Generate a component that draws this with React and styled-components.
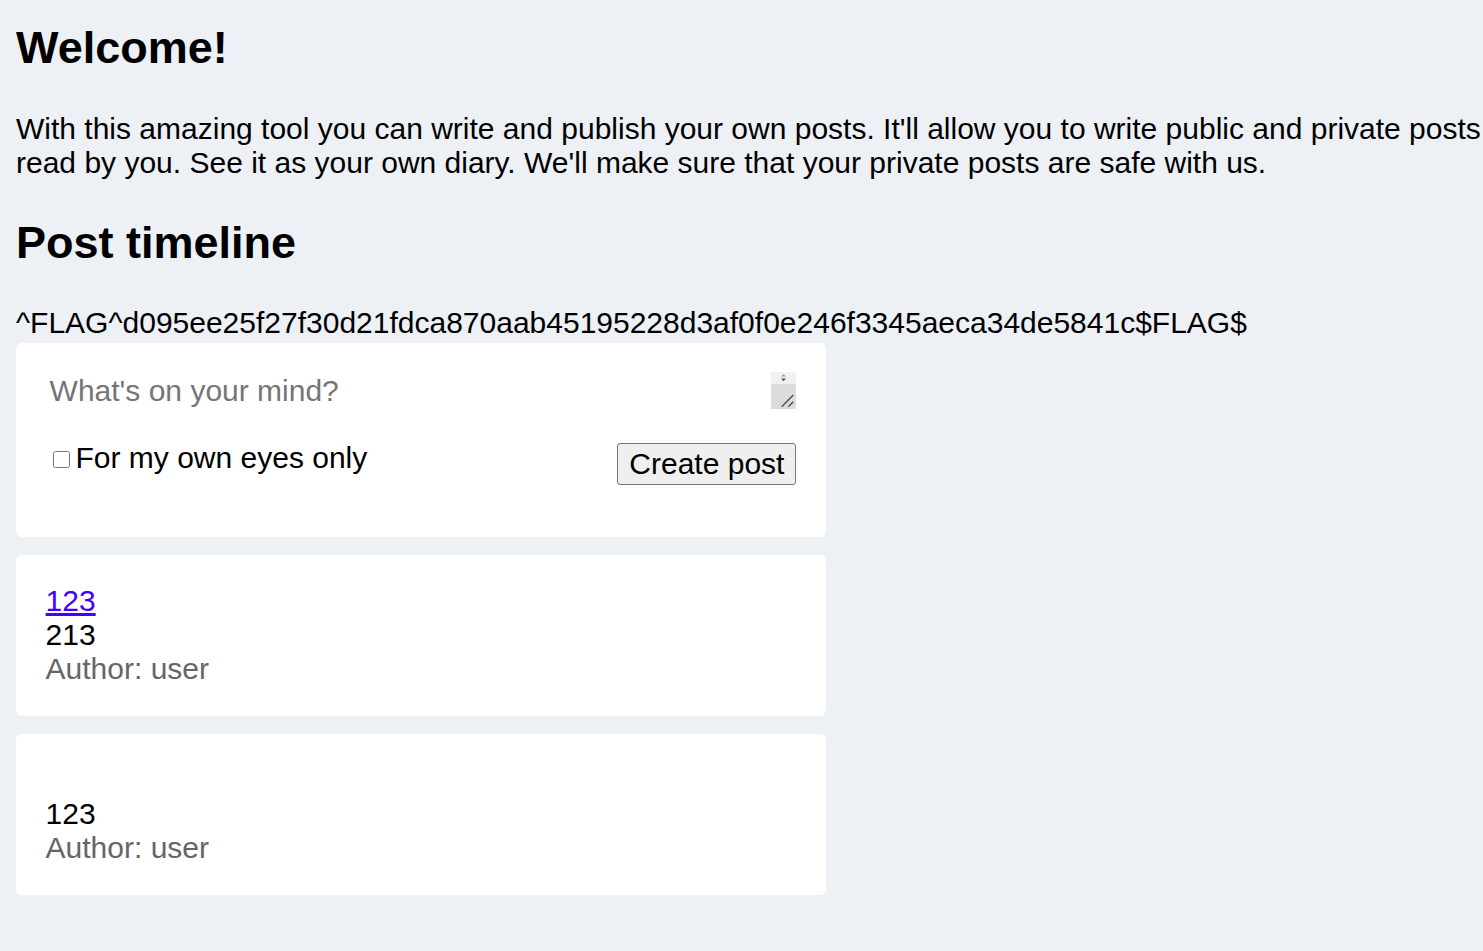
import React from 'react';
import styled, { createGlobalStyle } from 'styled-components';

const GlobalStyle = createGlobalStyle`
  html { overflow-x: hidden; }
  body {
    margin: 0;
    background: #edf0f5;
    font-family: "Liberation Sans", Arial, sans-serif;
    font-size: 30px;
    color: #000;
    overflow-x: hidden;
  }
`;

const Page = styled.main`
  padding: 22px 0 40px 16px;
`;

const Title = styled.h2`
  margin: 0 0 ${p => p.$mb}px;
  font-size: 45px;
  font-weight: 700;
  line-height: 51px;
`;

const Intro = styled.p`
  margin: 0 0 37.5px;
  line-height: 34px;
  white-space: nowrap;
`;

const Flag = styled.div`
  line-height: 34px;
  margin-bottom: 3px;
  white-space: nowrap;
`;

const Timeline = styled.div`
  display: flex;
  flex-direction: column;
  gap: 18px;
  width: 810px;
`;

const Card = styled.section`
  box-sizing: border-box;
  background: #fff;
  border-radius: 6px;
  padding: 29.6px;
`;

const Composer = styled.form`
  margin: 0;
`;

const FieldWrap = styled.div`
  position: relative;
`;

const TextArea = styled.textarea`
  display: block;
  width: 100%;
  box-sizing: border-box;
  height: 38px;
  padding: 2px 4px;
  border: none;
  outline: none;
  resize: none;
  overflow: hidden;
  font: inherit;
  line-height: 34px;
  background: transparent;
  color: #000;
  &::placeholder { color: #757575; }
`;

const ScrollStub = styled.svg`
  position: absolute;
  top: 0;
  right: 0;
  width: 25px;
  height: 37px;
  display: block;
`;

const Actions = styled.div`
  display: flex;
  justify-content: space-between;
  align-items: flex-start;
  margin-top: 30.4px;
  padding-bottom: 22.4px;
`;

const CheckLabel = styled.label`
  display: flex;
  align-items: center;
  line-height: 34px;
`;

const Check = styled.input`
  width: 17px;
  height: 17px;
  margin: 3px 5.5px 0 7.4px;
`;

const Button = styled.button`
  margin-top: 2px;
  font: inherit;
  line-height: 34px;
  padding: 3px 11px;
  border: 1px solid #767676;
  border-radius: 3px;
  background: #efefef;
  color: #000;
`;

const Line = styled.div`
  line-height: 34px;
  min-height: 34px;
  color: ${p => (p.$muted ? '#666666' : '#000')};
`;

const PostLink = styled.a`
  color: #4400ff;
  text-decoration: underline;
`;

const posts = [
  { id: 1, title: '123', body: '213', author: 'user' },
  { id: 2, title: '', body: '123', author: 'user' },
];

export default function App() {
  return (
    <>
      <GlobalStyle />
      <Page>
        <Title $mb={38.5}>Welcome!</Title>
        <Intro>
          With this amazing tool you can write and publish your own posts. It'll allow you to write public and private posts.
          <br />
          read by you. See it as your own diary. We'll make sure that your private posts are safe with us.
        </Intro>
        <Title $mb={37.6}>Post timeline</Title>
        <Flag>^FLAG^d095ee25f27f30d21fdca870aab45195228d3af0f0e246f3345aeca34de5841c$FLAG$</Flag>
        <Timeline>
          <Card>
            <Composer onSubmit={e => e.preventDefault()}>
              <FieldWrap>
                <TextArea rows={1} placeholder="What's on your mind?" />
                <ScrollStub viewBox="0 0 25 37">
                  <rect x="0" y="0" width="25" height="12" fill="#f1f1f1" />
                  <polygon points="10,4.5 15,4.5 12.5,2" fill="#a3a3a3" />
                  <polygon points="10,6.5 15,6.5 12.5,9.2" fill="#505050" />
                  <rect x="0" y="12" width="25" height="25" fill="#dcdcdc" />
                  <line x1="10.7" y1="34.7" x2="22.3" y2="23" stroke="#4d4d4d" strokeWidth="1.4" />
                  <line x1="17.3" y1="34.7" x2="22.3" y2="29.7" stroke="#4d4d4d" strokeWidth="1.4" />
                </ScrollStub>
              </FieldWrap>
              <Actions>
                <CheckLabel>
                  <Check type="checkbox" />
                  For my own eyes only
                </CheckLabel>
                <Button type="submit">Create post</Button>
              </Actions>
            </Composer>
          </Card>
          {posts.map(p => (
            <Card key={p.id}>
              <Line>{p.title ? <PostLink href="#">{p.title}</PostLink> : null}</Line>
              <Line>{p.body}</Line>
              <Line $muted>Author: {p.author}</Line>
            </Card>
          ))}
        </Timeline>
      </Page>
    </>
  );
}
